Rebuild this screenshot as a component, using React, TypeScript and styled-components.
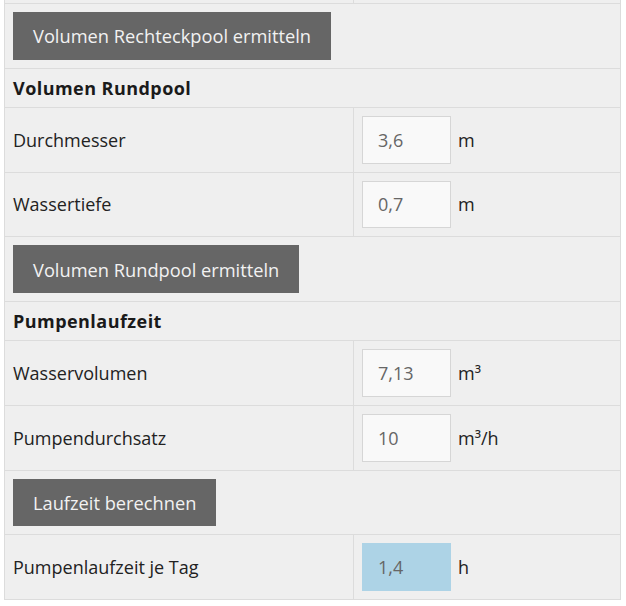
import React from "react";
import styled, { createGlobalStyle } from "styled-components";

const GlobalStyle = createGlobalStyle`
  html, body {
    margin: 0;
    padding: 0;
    background: #ffffff;
  }
  body {
    font-family: "Open Sans", "Liberation Sans", sans-serif;
  }
`;

const Page = styled.div`
  padding-left: 4px;
  width: 617px;
`;

const Table = styled.table`
  width: 617px;
  border-collapse: collapse;
  table-layout: fixed;
  background: #efefef;
  font-family: "Open Sans", "Liberation Sans", sans-serif;
  font-size: 18px;
  color: #222222;
`;

const Cell = styled.td<{ $clipped?: boolean }>`
  border: 1px solid #dcdcdc;
  border-top: ${(p) => (p.$clipped ? "0" : "1px solid #dcdcdc")};
  padding: ${(p) => (p.$clipped ? "0" : "8px")};
  height: ${(p) => (p.$clipped ? "3px" : "auto")};
  vertical-align: middle;
  line-height: 22px;
`;

const HeaderCell = styled(Cell)`
  font-weight: 700;
  letter-spacing: 0.45px;
  color: #1a1a1a;
`;

const ValueWrap = styled.div`
  display: flex;
  align-items: center;
  gap: 7px;
`;

const Field = styled.input<{ $result?: boolean }>`
  box-sizing: border-box;
  width: 89px;
  height: 47.75px;
  margin: 0;
  padding: 0 0 0 15px;
  border: 1px solid ${(p) => (p.$result ? "#add3e6" : "#d6d6d6")};
  background: ${(p) => (p.$result ? "#add3e6" : "#f9f9f9")};
  color: #666666;
  font-family: "Open Sans", "Liberation Sans", sans-serif;
  font-size: 18px;
  outline: none;
`;

const Unit = styled.span`
  color: #222222;
`;

const ActionButton = styled.button`
  box-sizing: border-box;
  height: 47.75px;
  margin: 0;
  padding: 0 20px;
  border: 0;
  background: #666666;
  color: #f2f2f2;
  font-family: "Open Sans", "Liberation Sans", sans-serif;
  font-size: 18.25px;
  cursor: pointer;
`;

type FieldProps = { label: string; value: string; unit: string; result?: boolean };

const InputRow = ({ label, value, unit, result }: FieldProps) => (
  <tr>
    <Cell>{label}</Cell>
    <Cell>
      <ValueWrap>
        <Field $result={result} defaultValue={value} readOnly={result} />
        <Unit>{unit}</Unit>
      </ValueWrap>
    </Cell>
  </tr>
);

const ButtonRow = ({ text }: { text: string }) => (
  <tr>
    <Cell colSpan={2}>
      <ActionButton>{text}</ActionButton>
    </Cell>
  </tr>
);

const HeaderRow = ({ text }: { text: string }) => (
  <tr>
    <HeaderCell colSpan={2}>{text}</HeaderCell>
  </tr>
);

export default function App() {
  return (
    <>
      <GlobalStyle />
      <Page>
        <Table>
          <colgroup>
            <col style={{ width: 349 }} />
            <col />
          </colgroup>
          <tbody>
            <tr>
              <Cell $clipped />
              <Cell $clipped />
            </tr>
            <ButtonRow text="Volumen Rechteckpool ermitteln" />
            <HeaderRow text="Volumen Rundpool" />
            <InputRow label="Durchmesser" value="3,6" unit="m" />
            <InputRow label="Wassertiefe" value="0,7" unit="m" />
            <ButtonRow text="Volumen Rundpool ermitteln" />
            <HeaderRow text="Pumpenlaufzeit" />
            <InputRow label="Wasservolumen" value="7,13" unit="m³" />
            <InputRow label="Pumpendurchsatz" value="10" unit="m³/h" />
            <ButtonRow text="Laufzeit berechnen" />
            <InputRow label="Pumpenlaufzeit je Tag" value="1,4" unit="h" result />
          </tbody>
        </Table>
      </Page>
    </>
  );
}
